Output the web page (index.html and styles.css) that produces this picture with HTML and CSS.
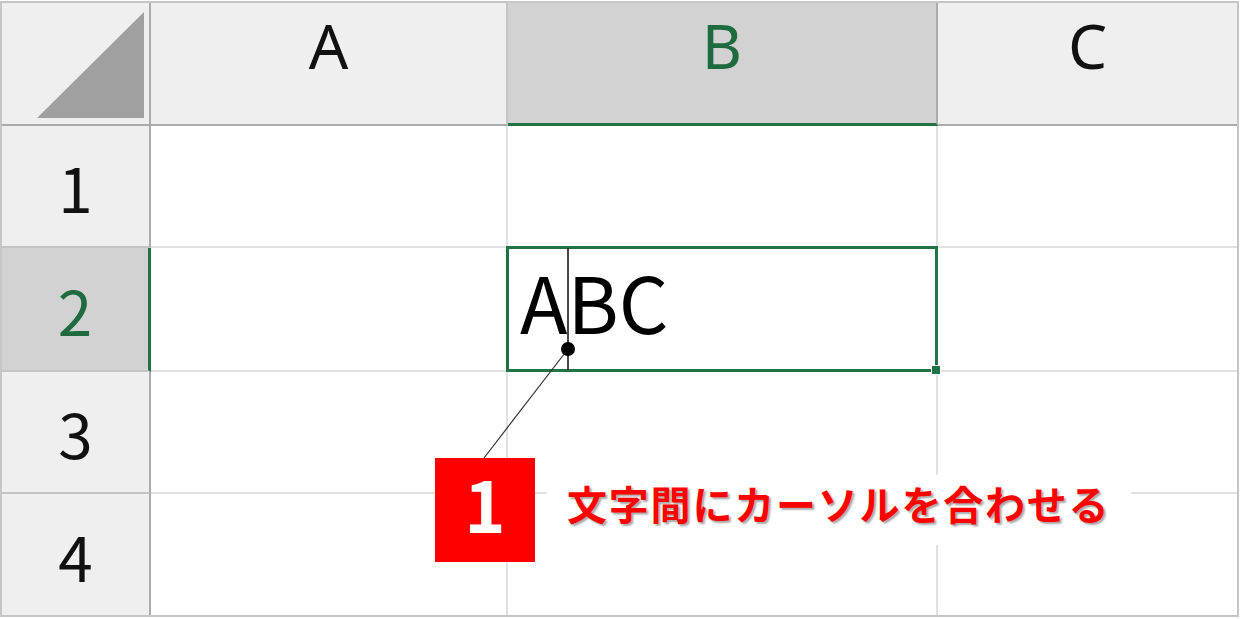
FILE: index.html
```html
<!DOCTYPE html>
<html lang="ja">
<head>
<meta charset="utf-8">
<title>Excel cursor</title>
<link rel="stylesheet" href="styles.css">
</head>
<body>
<div class="page">
  <div class="sheet">
    <div class="corner">
      <svg class="corner-tri" width="107" height="106" viewBox="0 0 107 106"><polygon points="0,106 107,106 107,0" fill="#a0a0a0"/></svg>
    </div>
    <div class="colhead">A</div>
    <div class="colhead is-sel">B</div>
    <div class="colhead last">C</div>

    <div class="rowhead">1</div>
    <div class="cell"></div>
    <div class="cell"></div>
    <div class="cell last"></div>

    <div class="rowhead is-sel">2</div>
    <div class="cell"></div>
    <div class="cell active"><span class="value">ABC</span><span class="selection"></span><span class="handle"></span></div>
    <div class="cell last"></div>

    <div class="rowhead">3</div>
    <div class="cell"></div>
    <div class="cell"></div>
    <div class="cell last"></div>

    <div class="rowhead bottom">4</div>
    <div class="cell bottom"></div>
    <div class="cell bottom"></div>
    <div class="cell last bottom"></div>
  </div>

  <svg class="annot" width="1240" height="619" viewBox="0 0 1240 619">
    <line x1="568" y1="248" x2="568" y2="370" stroke="#1a1a1a" stroke-width="1.6"/>
    <line x1="568" y1="349" x2="484" y2="458" stroke="#333" stroke-width="1.2"/>
    <circle cx="568" cy="349" r="7" fill="#000"/>
  </svg>

  <div class="callout">
    <div class="badge">1</div>
    <div class="label">文字間にカーソルを合わせる</div>
  </div>
</div>
</body>
</html>
```

FILE: styles.css
```css
html, body {
  margin: 0;
  padding: 0;
  background: #ffffff;
}

.page {
  position: relative;
  width: 1240px;
  height: 619px;
  overflow: hidden;
  font-family: "Noto Sans CJK JP", "Noto Sans", sans-serif;
}

.sheet {
  margin-top: 1px;
  width: 1235px;
  height: 612px;
  border: 2px solid #c6c6c6;
  display: grid;
  grid-template-columns: 149px 357px 430px 299px;
  grid-template-rows: 123px 122px 124px 122px 121px;
  background: #ffffff;
}

.sheet > div {
  box-sizing: border-box;
}

.cell {
  border-right: 2px solid #e1e1e1;
  border-bottom: 2px solid #e1e1e1;
}

.cell.last { border-right: none; }
.cell.bottom { border-bottom: none; }

.corner {
  background: #efefef;
  border-right: 2px solid #ababab;
  border-bottom: 2px solid #ababab;
  display: flex;
  justify-content: flex-end;
  align-items: flex-end;
  padding: 0 5px 6px 0;
}

.corner-tri { display: block; }

.colhead {
  background: #efefef;
  border-right: 2px solid #c4c4c4;
  border-bottom: 2px solid #ababab;
  display: flex;
  justify-content: center;
  align-items: flex-start;
  padding-top: 0;
  font-family: "Noto Sans", "Open Sans", sans-serif;
  font-size: 62px;
  line-height: 85px;
  color: #111;
}

.colhead.last { border-right: none; }

.colhead.is-sel {
  background: #d2d2d2;
  color: #1d6b3f;
  border-bottom: 3px solid #217346;
  border-right-color: #ababab;
}

.rowhead {
  background: #efefef;
  border-right: 2px solid #ababab;
  border-bottom: 2px solid #c4c4c4;
  display: flex;
  justify-content: center;
  align-items: center;
  font-size: 62px;
  line-height: 90px;
  color: #111;
}

.rowhead.bottom { border-bottom: none; }

.rowhead.is-sel {
  background: #d2d2d2;
  color: #1d6b3f;
  border-right: 3px solid #217346;
}

.cell.active {
  position: relative;
  padding: 6px 0 0 12px;
}

.value {
  display: block;
  font-size: 78px;
  line-height: 92px;
  color: #000;
}

.selection {
  position: absolute;
  left: -2px;
  top: -2px;
  right: -2px;
  bottom: -2px;
  border: 3px solid #217346;
}

.handle {
  position: absolute;
  right: -4px;
  bottom: -4px;
  width: 8px;
  height: 8px;
  background: #217346;
  outline: 1px solid #ffffff;
}

.annot {
  position: absolute;
  left: 0;
  top: 0;
  pointer-events: none;
}

.callout {
  position: absolute;
  left: 435px;
  top: 458px;
  display: flex;
  align-items: flex-start;
}

.badge {
  width: 100px;
  height: 104px;
  box-sizing: border-box;
  padding-bottom: 14px;
  background: #ff0000;
  color: #ffffff;
  display: flex;
  justify-content: center;
  align-items: center;
  font-size: 70px;
  font-weight: 700;
  line-height: 84px;
}

.label {
  margin-left: 12px;
  margin-top: 17px;
  width: 584px;
  height: 70px;
  box-sizing: border-box;
  padding-left: 20px;
  background: #ffffff;
  color: #ff0000;
  font-size: 40px;
  font-weight: 700;
  line-height: 56px;
  letter-spacing: 1.8px;
  white-space: nowrap;
  text-shadow: 2px 2px 2px rgba(0, 0, 0, 0.35);
}
```
